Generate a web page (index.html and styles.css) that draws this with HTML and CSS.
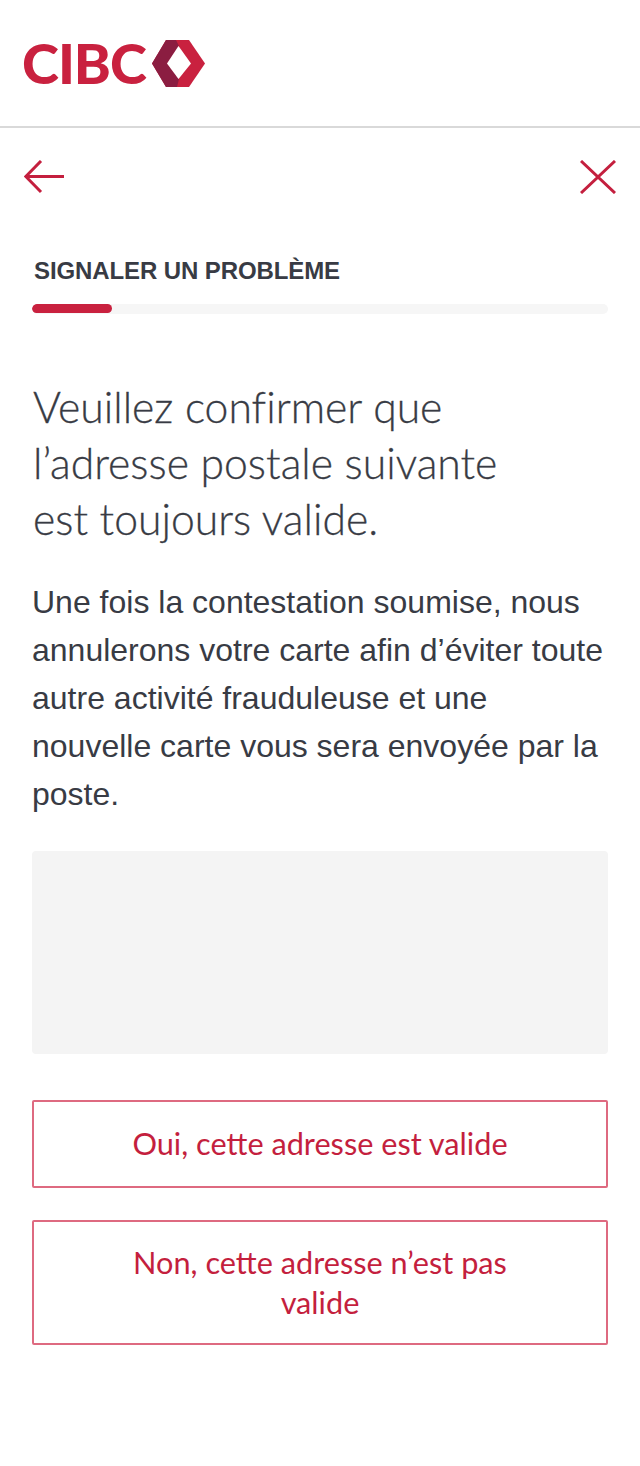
FILE: index.html
```html
<!DOCTYPE html>
<html lang="fr">
<head>
<meta charset="utf-8">
<title>CIBC</title>
<link rel="stylesheet" href="styles.css">
</head>
<body>
<header class="brand">
  <div class="logo">
    <span class="logo-text">CIBC</span>
    <svg class="logo-mark" viewBox="0 0 53 47" width="53" height="47" aria-hidden="true">
      <path fill="#c9213f" d="M14 0H37L53 23.500L37 47H14L0 23.500Z"/>
      <path fill="#8b1d41" d="M14 0H24L27 6L15 23.500L27 39L25 47H14L0 23.500Z"/>
      <path fill="#fff" d="M26.500 6L39 23.500L26.500 39L15 23.500Z"/>
    </svg>
  </div>
</header>
<main class="page">
  <nav class="toolbar">
    <svg class="icon-back" viewBox="0 0 40 34" width="40" height="34" aria-hidden="true"><path d="M40 16.500H2M17 1L1.800 16.500L17 32" fill="none" stroke="#c41f3e" stroke-width="3"/></svg>
    <svg class="icon-close" viewBox="0 0 36 34" width="36" height="34" aria-hidden="true"><path d="M1 1L35 33M35 1L1 33" fill="none" stroke="#c41f3e" stroke-width="3"/></svg>
  </nav>
  <section class="content">
    <div class="eyebrow">SIGNALER UN PROBLÈME</div>
    <div class="progress"><div class="progress-fill"></div></div>
    <h1 class="title">Veuillez confirmer que<br>l’adresse postale suivante<br>est toujours valide.</h1>
    <p class="copy">Une fois la contestation soumise, nous annulerons votre carte afin d’éviter toute autre activité frauduleuse et une nouvelle carte vous sera envoyée par la poste.</p>
    <div class="address"></div>
    <div class="actions">
      <button class="action action-single" type="button">Oui, cette adresse est valide</button>
      <button class="action action-double" type="button">Non, cette adresse n’est pas valide</button>
    </div>
  </section>
</main>
</body>
</html>
```
FILE: styles.css
```css
* { box-sizing: border-box; }
html, body { margin: 0; padding: 0; background: #fff; }
body { width: 640px; height: 1466px; overflow: hidden; font-family: "Liberation Sans", Arial, sans-serif; color: #383b44; font-variant-ligatures: none; }
.brand { height: 128px; border-bottom: 2px solid #d9d9d9; padding: 38px 0 0 22px; }
.logo { display: flex; align-items: center; gap: 6px; height: 50px; }
.logo-text { font-family: Lato, sans-serif; font-weight: 900; font-size: 56px; line-height: 50px; letter-spacing: -1px; color: #c9213f; }
.logo-mark { display: block; }
.toolbar { display: flex; justify-content: space-between; align-items: center; padding: 31px 24px 0 24px; height: 67px; }
.content { padding: 0 32px; }
.eyebrow { margin-top: 61px; margin-left: 2px; font-size: 24px; line-height: 30px; font-weight: 700; color: #383b44; letter-spacing: -0.100px; }
.progress { margin-top: 18px; height: 10px; border-radius: 5px; background: #f6f6f6; overflow: hidden; }
.progress-fill { width: 80px; height: 9px; border-radius: 5px; background: #c9213f; }
.title { margin: 65px 0 0 1px; font-family: Lato, sans-serif; font-weight: 300; font-size: 42.700px; line-height: 56px; color: #383b44; -webkit-text-stroke: 0.300px #383b44; }
.copy { margin: 31px 0 0; font-size: 32px; line-height: 48px; color: #383b44; }
.address { margin-top: 33px; height: 203px; border-radius: 4px; background: #f4f4f4; }
.actions { display: flex; flex-direction: column; gap: 32px; margin-top: 46px; }
.action { display: block; width: 100%; padding: 0 70px; background: #fff; border: 2px solid #de6a80; border-radius: 2px; font-family: Lato, sans-serif; font-weight: 400; font-size: 30.700px; line-height: 40px; color: #c41f3e; text-align: center; }
.action-single { padding-top: 22px; padding-bottom: 22px; }
.action-double { padding-top: 21px; padding-bottom: 20px; }
```
